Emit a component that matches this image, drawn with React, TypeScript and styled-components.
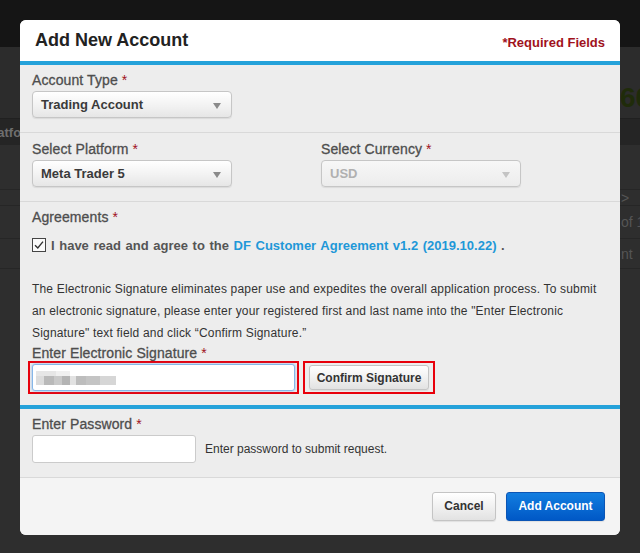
import React from "react";
import styled, { createGlobalStyle } from "styled-components";

const Global = createGlobalStyle`
  html, body { margin: 0; padding: 0; }
  body {
    font-family: "Liberation Sans", Arial, sans-serif;
    background: #2e2e2e;
    overflow: hidden;
  }
  * { box-sizing: border-box; }
`;

/* ---------- backdrop page ---------- */
const Page = styled.div`
  position: relative;
  width: 640px;
  height: 553px;
  overflow: hidden;
  background: #2e2e2e;
`;
const TopBar = styled.div`
  height: 47px;
  background: #151515;
`;
const HeroRow = styled.div`
  height: 71px;
  background: #2c2c2c;
  display: flex;
  align-items: flex-end;
  padding: 0 0 6px 620px;
  white-space: nowrap;
`;
const BigNumber = styled.span`
  font: bold 28px/1 "Liberation Sans", Arial, sans-serif;
  color: #1f2b0a;
`;
const TableHead = styled.div`
  height: 27px;
  background: #252525;
  border-top: 1px solid #202020;
  display: flex;
  align-items: center;
  white-space: nowrap;
`;
const HeadText = styled.span`
  margin-left: -15px;
  font: bold 13px "Liberation Sans", Arial, sans-serif;
  color: #6f6f6f;
`;
const BgRow = styled.div<{ $h: number }>`
  height: ${(p) => p.$h}px;
  border-bottom: 1px solid #262626;
  display: flex;
  align-items: center;
  padding-left: 621px;
  white-space: nowrap;
  font: 14px "Liberation Sans", Arial, sans-serif;
  color: #555;
`;

/* ---------- modal ---------- */
const Modal = styled.div`
  position: absolute;
  top: 20px;
  left: 20px;
  width: 600px;
  height: 515px;
  border-radius: 6px;
  overflow: hidden;
  background: #ededed;
  display: flex;
  flex-direction: column;
`;
const Header = styled.div`
  height: 45px;
  flex-shrink: 0;
  background: #fff;
  border-bottom: 4px solid #25a2da;
  padding: 0 15px 0 15px;
  display: flex;
  align-items: center;
  justify-content: space-between;
`;
const Title = styled.h1`
  margin: 0;
  font: bold 18px "Liberation Sans", Arial, sans-serif;
  color: #222;
`;
const Required = styled.span`
  font: bold 13px "Liberation Sans", Arial, sans-serif;
  color: #a0121c;
  margin-top: 4px;
`;
const Section = styled.div<{ $pt: number; $pb: number; $topLine?: boolean; $line?: boolean }>`
  flex-shrink: 0;
  padding: ${(p) => p.$pt}px 12px ${(p) => p.$pb}px 12px;
  border-top: ${(p) => (p.$topLine ? "4px solid #25a2da" : "none")};
  border-bottom: ${(p) => (p.$line ? "1px solid #d9d9d9" : "none")};
`;
const TwoCols = styled.div`
  display: grid;
  grid-template-columns: 289px 1fr;
`;
const Field = styled.div`
  display: flex;
  flex-direction: column;
  align-items: flex-start;
  gap: 3px;
`;
const Label = styled.label`
  display: block;
  font: 14px/16px "Liberation Sans", Arial, sans-serif;
  color: #4e4e4e;
  -webkit-text-stroke: 0.3px #4e4e4e;
  letter-spacing: 0.1px;
`;
const Star = styled.span`
  color: #a0121c;
  -webkit-text-stroke: 0;
`;
const Select = styled.div<{ $disabled?: boolean }>`
  position: relative;
  width: 200px;
  height: 27px;
  border: 1px solid #c6c6c6;
  border-radius: 4px;
  background: ${(p) =>
    p.$disabled ? "linear-gradient(#f7f7f7, #ececec)" : "linear-gradient(#ffffff, #f2f2f2 55%, #e6e6e6)"};
  box-shadow: 0 1px 1px rgba(0, 0, 0, 0.08);
  padding-left: 8px;
  display: flex;
  align-items: center;
  font: bold 13px "Liberation Sans", Arial, sans-serif;
  color: ${(p) => (p.$disabled ? "#b0b0b0" : "#3a3a3a")};
  &::after {
    content: "";
    position: absolute;
    right: 10px;
    top: 11px;
    border-left: 4px solid transparent;
    border-right: 4px solid transparent;
    border-top: 6px solid ${(p) => (p.$disabled ? "#c4c4c4" : "#8a8a8a")};
  }
`;
const AgreeRow = styled.div`
  margin-top: 10px;
  height: 20px;
  display: flex;
  align-items: center;
  gap: 5px;
  font: bold 13px "Liberation Sans", Arial, sans-serif;
  word-spacing: 1px;
  color: #555;
`;
const Link = styled.a`
  color: #1f98d8;
  text-decoration: none;
`;
const Paragraph = styled.p`
  margin: 23px 0 0 0;
  max-width: 570px;
  font: 12px/22px "Liberation Sans", Arial, sans-serif;
  letter-spacing: 0.18px;
  color: #333;
`;
const SigLabel = styled(Label)`
  margin-top: 1px;
`;
const SigRow = styled.div`
  display: flex;
  align-items: flex-start;
  gap: 4px;
  margin-left: -4px;
`;
const Highlight = styled.div<{ $px: number; $py: number }>`
  border: 2px solid #e8000b;
  padding: ${(p) => p.$py}px ${(p) => p.$px}px;
  display: flex;
`;
const SigInput = styled.div`
  width: 263px;
  height: 27px;
  background: #fff;
  border: 1px solid #86b7e8;
  border-radius: 3px;
  box-shadow: 0 0 3px rgba(82, 150, 230, 0.6);
  display: flex;
  align-items: center;
  padding-left: 3px;
`;
const Button = styled.button<{ $primary?: boolean; $w: number; $h: number }>`
  width: ${(p) => p.$w}px;
  height: ${(p) => p.$h}px;
  padding: 0;
  border-radius: 3px;
  border: 1px solid ${(p) => (p.$primary ? "#0b55b5" : "#c4c4c4")};
  background: ${(p) =>
    p.$primary ? "linear-gradient(#127ee0, #0058c6)" : "linear-gradient(#ffffff, #f1f1f1 50%, #e2e2e2)"};
  color: ${(p) => (p.$primary ? "#fff" : "#333")};
  font: bold 12px "Liberation Sans", Arial, sans-serif;
  box-shadow: 0 1px 1px rgba(0, 0, 0, 0.08);
  cursor: pointer;
`;
const PwRow = styled.div`
  display: flex;
  align-items: center;
  gap: 9px;
`;
const PwInput = styled.div`
  width: 164px;
  height: 28px;
  background: #fff;
  border: 1px solid #cbcbcb;
  border-radius: 3px;
`;
const Hint = styled.span`
  font: 12px "Liberation Sans", Arial, sans-serif;
  color: #333;
`;
const Spacer = styled.div`
  flex: 1;
  background: #f4f4f4;
`;
const Footer = styled.div`
  flex-shrink: 0;
  background: #f4f4f4;
  height: 58px;
  padding: 0 15px 2px;
  display: flex;
  align-items: center;
  justify-content: flex-end;
  gap: 10px;
`;

const CheckIcon = () => (
  <svg width="14" height="14" viewBox="0 0 14 14">
    <rect x="0.5" y="0.5" width="13" height="13" fill="#fafafa" stroke="#444" />
    <path d="M3 7.2 L5.8 10 L11 3.6" fill="none" stroke="#333" strokeWidth="1.4" />
  </svg>
);

const Redacted = () => (
  <svg width="82" height="14" viewBox="0 0 82 14">
    <rect x="0" y="0" width="20" height="5" fill="#e6e6e6" />
    <rect x="20" y="0" width="14" height="5" fill="#f0f0f0" />
    <rect x="0" y="5" width="8" height="9" fill="#dcdcdc" />
    <rect x="8" y="5" width="10" height="9" fill="#b9b9b9" />
    <rect x="18" y="5" width="8" height="9" fill="#c9c9c9" />
    <rect x="26" y="5" width="8" height="9" fill="#b4b4b4" />
    <rect x="34" y="5" width="6" height="9" fill="#e2e2e2" />
    <rect x="40" y="5" width="10" height="9" fill="#bdbdbd" />
    <rect x="50" y="5" width="14" height="9" fill="#c4c4c4" />
    <rect x="64" y="5" width="16" height="9" fill="#d6d6d6" />
  </svg>
);

export default function App() {
  return (
    <>
      <Global />
      <Page>
        <TopBar />
        <HeroRow>
          <BigNumber>60</BigNumber>
        </HeroRow>
        <TableHead>
          <HeadText>Platform</HeadText>
        </TableHead>
        <BgRow $h={45} />
        <BgRow $h={16}>&gt;</BgRow>
        <BgRow $h={33}>of 1</BgRow>
        <BgRow $h={30}>nt</BgRow>

        <Modal>
          <Header>
            <Title>Add New Account</Title>
            <Required>*Required Fields</Required>
          </Header>

          <Section $pt={7} $pb={14} $line>
            <Field>
              <Label>
                Account Type <Star>*</Star>
              </Label>
              <Select>Trading Account</Select>
            </Field>
          </Section>

          <Section $pt={8} $pb={14} $line>
            <TwoCols>
              <Field>
                <Label>
                  Select Platform <Star>*</Star>
                </Label>
                <Select>Meta Trader 5</Select>
              </Field>
              <Field>
                <Label>
                  Select Currency <Star>*</Star>
                </Label>
                <Select $disabled>USD</Select>
              </Field>
            </TwoCols>
          </Section>

          <Section $pt={7} $pb={11}>
            <Label>
              Agreements <Star>*</Star>
            </Label>
            <AgreeRow>
              <CheckIcon />
              <span>
                I have read and agree to the <Link>DF Customer Agreement v1.2 (2019.10.22)</Link> .
              </span>
            </AgreeRow>
            <Paragraph>
              The Electronic Signature eliminates paper use and expedites the overall application process. To submit
              an electronic signature, please enter your registered first and last name into the "Enter Electronic
              Signature" text field and click “Confirm Signature.”
            </Paragraph>
            <SigLabel>
              Enter Electronic Signature <Star>*</Star>
            </SigLabel>
            <SigRow>
              <Highlight $px={2} $py={1}>
                <SigInput>
                  <Redacted />
                </SigInput>
              </Highlight>
              <Highlight $px={4} $py={2}>
                <Button $w={120} $h={25}>
                  Confirm Signature
                </Button>
              </Highlight>
            </SigRow>
          </Section>

          <Section $pt={7} $pb={14} $topLine $line>
            <Field>
              <Label>
                Enter Password <Star>*</Star>
              </Label>
              <PwRow>
                <PwInput />
                <Hint>Enter password to submit request.</Hint>
              </PwRow>
            </Field>
          </Section>

          <Spacer />
          <Footer>
            <Button $w={64} $h={29}>
              Cancel
            </Button>
            <Button $primary $w={99} $h={29}>
              Add Account
            </Button>
          </Footer>
        </Modal>
      </Page>
    </>
  );
}
